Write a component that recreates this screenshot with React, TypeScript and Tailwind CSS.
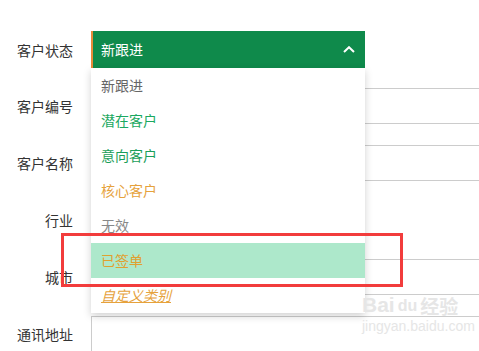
const rows = [
  { label: "客户状态", type: "select" },
  { label: "客户编号", type: "input" },
  { label: "客户名称", type: "input" },
  { label: "行业", type: "none" },
  { label: "城市", type: "input" },
  { label: "通讯地址", type: "input" },
];

const options = [
  { text: "新跟进", cls: "text-[#666666]" },
  { text: "潜在客户", cls: "text-[#1aa860]" },
  { text: "意向客户", cls: "text-[#1a9e5a]" },
  { text: "核心客户", cls: "text-[#e6a23c]" },
  { text: "无效", cls: "text-[#888888]" },
  { text: "已签单", cls: "text-[#e0a030] bg-[#ade8cb]" },
];

const App = () => {
  return (
    <main
      className="relative w-[479px] h-[351px] overflow-hidden bg-white text-[14px] text-[#333333]"
      style={{ fontFamily: '"Noto Sans CJK SC", "Noto Sans", sans-serif' }}
    >
      {/* 表单行 */}
      <div className="flex flex-col gap-[21px] pt-[31px]">
        {rows.map((r, i) => (
          <div key={r.label} className={`flex items-center ${i === 0 ? "h-[37px] -mb-px" : "h-9"}`}>
            <label className="w-[73px] shrink-0 text-right leading-none">{r.label}</label>
            <div className="ml-[18px] flex-1 h-full">
              {r.type === "select" && (
                <div className="w-[274px] h-full bg-[#0f8a4b] border-l-2 border-[#e88a3a] flex items-center justify-between pl-[8px] pr-[10px] text-white">
                  <span>新跟进</span>
                  <svg width="12" height="7" viewBox="0 0 12 7" fill="none">
                    <path d="M1 6 L6 1.2 L11 6" stroke="white" strokeWidth="2" />
                  </svg>
                </div>
              )}
              {r.type === "input" && (
                <div className="w-[400px] h-full border border-[#cccccc]" />
              )}
            </div>
          </div>
        ))}
      </div>

      {/* 下拉菜单 */}
      <ul className="absolute left-[91px] top-[68px] w-[274px] bg-white shadow-[0_3px_8px_rgba(0,0,0,0.18)]">
        {options.map((o) => (
          <li key={o.text} className={`h-[35px] flex items-center pl-[10px] ${o.cls}`}>
            {o.text}
          </li>
        ))}
        <li className="h-[35px] flex items-center pl-[10px]">
          <span className="italic underline text-[#e6a23c]">自定义类别</span>
        </li>
      </ul>

      {/* 标注框 */}
      <div className="absolute left-[61px] top-[233px] w-[342px] h-[54px] border-[3px] border-[#f23c3c]" />

      {/* 水印 */}
      <div className="absolute left-[362px] top-[294px] flex flex-col items-start text-[#e6e6e6] leading-none pointer-events-none">
        <div className="flex items-end gap-[3px]">
          <span className="text-[21px] font-bold" style={{ fontFamily: '"Liberation Sans", sans-serif' }}>Bai</span>
          <span className="text-[16px] font-bold mb-[1px]" style={{ fontFamily: '"Liberation Sans", sans-serif' }}>du</span>
          <span className="text-[19px] font-bold">经验</span>
        </div>
        <span className="mt-[4px] text-[14px]" style={{ fontFamily: '"Liberation Sans", sans-serif' }}>jingyan.baidu.com</span>
      </div>
    </main>
  );
};

export default App;
